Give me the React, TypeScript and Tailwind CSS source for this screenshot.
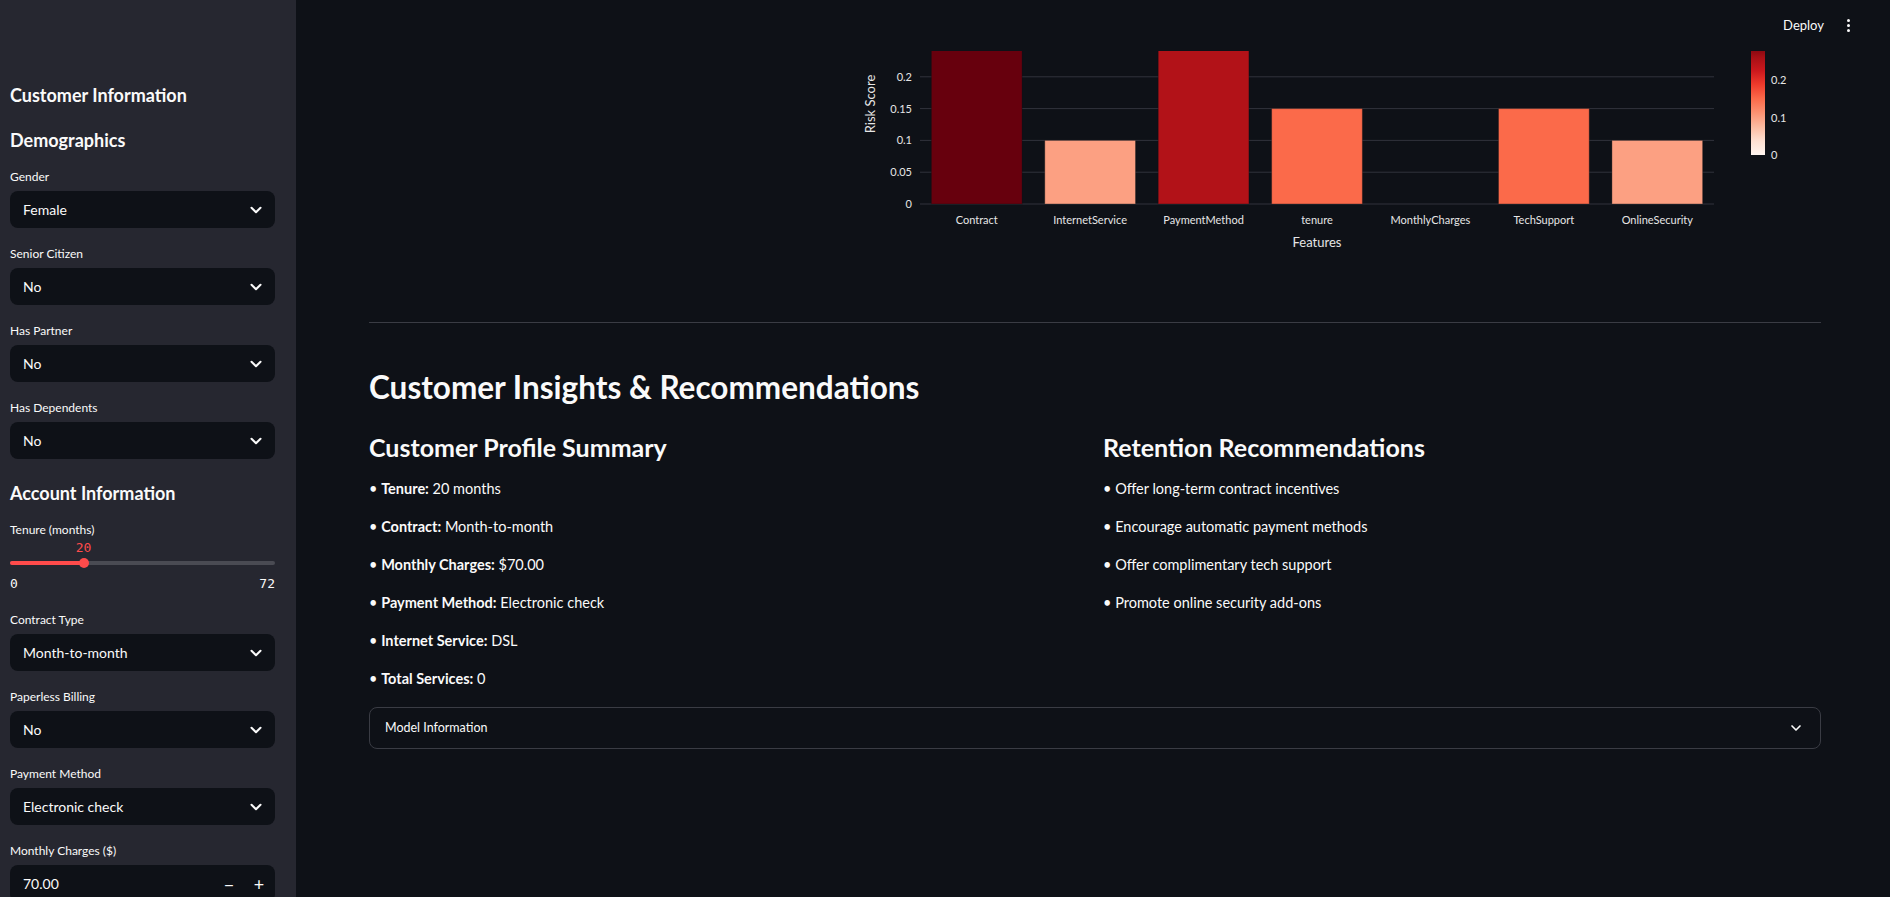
import React from 'react';
import { ChevronDown } from 'lucide-react';

const REDS: [number, number[]][] = [
  [0, [255, 245, 240]],
  [0.125, [254, 224, 210]],
  [0.25, [252, 187, 161]],
  [0.375, [252, 146, 114]],
  [0.5, [251, 106, 74]],
  [0.625, [239, 59, 44]],
  [0.75, [203, 24, 29]],
  [0.875, [165, 15, 21]],
  [1, [103, 0, 13]],
];

function redsColor(t: number) {
  for (let i = 1; i < REDS.length; i++) {
    const [p1, c1] = REDS[i];
    const [p0, c0] = REDS[i - 1];
    if (t <= p1) {
      const f = (t - p0) / (p1 - p0);
      const c = c0.map((a, k) => Math.round(a + (c1[k] - a) * f));
      return `rgb(${c[0]},${c[1]},${c[2]})`;
    }
  }
  return 'rgb(103,0,13)';
}

const features = [
  { name: 'Contract', v: 0.3 },
  { name: 'InternetService', v: 0.1 },
  { name: 'PaymentMethod', v: 0.25 },
  { name: 'tenure', v: 0.15 },
  { name: 'MonthlyCharges', v: 0 },
  { name: 'TechSupport', v: 0.15 },
  { name: 'OnlineSecurity', v: 0.1 },
];

const profile = [
  ['Tenure:', '20 months'],
  ['Contract:', 'Month-to-month'],
  ['Monthly Charges:', '$70.00'],
  ['Payment Method:', 'Electronic check'],
  ['Internet Service:', 'DSL'],
  ['Total Services:', '0'],
];

const recommendations = [
  'Offer long-term contract incentives',
  'Encourage automatic payment methods',
  'Offer complimentary tech support',
  'Promote online security add-ons',
];

const SelectBox = ({ label, value }: { label: string; value: string }) => (
  <div className="mb-4">
    <div className="h-5 text-[12px] leading-5">{label}</div>
    <div className="mt-1 flex h-[37px] items-center justify-between rounded-lg bg-[#0e1117] pl-[13px] pr-[10px] text-[14px]">
      <span>{value}</span>
      <ChevronDown size={18} strokeWidth={2.75} />
    </div>
  </div>
);

const RiskChart = () => {
  const x0 = 920;
  const x1 = 1714;
  const step = (x1 - x0) / features.length;
  const y = (v: number) => 204 - 636 * v;
  const cy = (v: number) => 155 - 375 * v;
  return (
    <svg viewBox="369 51 1452 210" width={1452} height={210} className="block" fontFamily="Lato, sans-serif">
      <defs>
        <linearGradient id="reds" x1="0" y1="1" x2="0" y2="0">
          {REDS.map(([p, c]) => (
            <stop key={p} offset={p} stopColor={`rgb(${c[0]},${c[1]},${c[2]})`} />
          ))}
        </linearGradient>
      </defs>
      {[0, 0.05, 0.1, 0.15, 0.2].map((t) => (
        <g key={t}>
          <line x1={x0} x2={x1} y1={y(t)} y2={y(t)} stroke="#31333c" strokeWidth={1} />
          <text x={912} y={y(t) + 4} fontSize={11} fill="#e6e6e6" textAnchor="end">
            {t}
          </text>
        </g>
      ))}
      {features.map((f, i) => {
        const cx = x0 + step * (i + 0.5);
        const w = step * 0.8;
        return (
          <g key={f.name}>
            {f.v > 0 && (
              <rect
                x={cx - w / 2}
                y={y(f.v)}
                width={w}
                height={204 - y(f.v)}
                fill={redsColor(f.v / 0.3)}
                stroke="rgba(14,17,23,0.35)"
                strokeWidth={1}
              />
            )}
            <text x={cx} y={224} fontSize={11} fill="#e6e6e6" textAnchor="middle">
              {f.name}
            </text>
          </g>
        );
      })}
      <text x={1317} y={247} fontSize={13} fill="#e6e6e6" textAnchor="middle">
        Features
      </text>
      <text x={875} y={104} fontSize={13} fill="#e6e6e6" textAnchor="middle" transform="rotate(-90 875 104)">
        Risk Score
      </text>
      <rect x={1751} y={cy(0.3)} width={14} height={cy(0) - cy(0.3)} fill="url(#reds)" />
      {[0, 0.1, 0.2].map((t) => (
        <text key={t} x={1771} y={cy(t) + 4} fontSize={11} fill="#e6e6e6">
          {t}
        </text>
      ))}
    </svg>
  );
};

export default function App() {
  const tenure = 20;
  const trackW = 265;
  const fill = (tenure / 72) * trackW;

  return (
    <div className="flex h-screen w-full overflow-hidden bg-[#0e1117] font-['Lato',sans-serif] text-[#fafafa]">
      <aside className="w-[296px] shrink-0 bg-[#262730] pl-[10px] pr-[21px] pt-[81px]">
        <h2 className="text-[18px] font-bold leading-7">Customer Information</h2>
        <h3 className="mt-[17px] text-[18px] font-bold leading-7">Demographics</h3>
        <div className="mt-[13px]">
          <SelectBox label="Gender" value="Female" />
          <SelectBox label="Senior Citizen" value="No" />
          <SelectBox label="Has Partner" value="No" />
          <SelectBox label="Has Dependents" value="No" />
        </div>
        <h3 className="mt-[20px] text-[18px] font-bold leading-7">Account Information</h3>
        <div className="mb-[18px] mt-[13px]">
          <div className="h-5 text-[12px] leading-5">Tenure (months)</div>
          <div className="relative h-4">
            <span
              className="absolute top-0 -translate-x-1/2 font-['DejaVu_Sans_Mono',monospace] text-[13px] leading-4 text-[#ff4b4b]"
              style={{ left: fill }}
            >
              {tenure}
            </span>
          </div>
          <div className="relative h-[14px]">
            <div className="absolute left-0 right-0 top-[5px] h-1 rounded-full bg-[#4a4b53]" />
            <div className="absolute left-0 top-[5px] h-1 rounded-full bg-[#ff4b4b]" style={{ width: fill }} />
            <div
              className="absolute top-[2px] h-[10px] w-[10px] -translate-x-1/2 rounded-full bg-[#ff4b4b]"
              style={{ left: fill }}
            />
          </div>
          <div className="mt-[6px] flex justify-between font-['DejaVu_Sans_Mono',monospace] text-[13px] leading-4">
            <span>0</span>
            <span>72</span>
          </div>
        </div>
        <SelectBox label="Contract Type" value="Month-to-month" />
        <SelectBox label="Paperless Billing" value="No" />
        <SelectBox label="Payment Method" value="Electronic check" />
        <div>
          <div className="h-5 text-[12px] leading-5">Monthly Charges ($)</div>
          <div className="mt-1 flex h-[37px] items-center rounded-lg bg-[#0e1117] pl-[13px] pr-[1px] text-[14px]">
            <span className="flex-1">70.00</span>
            <span className="flex w-[30px] justify-center text-lg">−</span>
            <span className="flex w-[30px] justify-center text-lg">+</span>
          </div>
        </div>
      </aside>

      <main className="flex-1">
        <header className="flex h-[51px] items-center justify-end pr-[38px]">
          <span className="text-[13px]">Deploy</span>
          <span className="ml-5 flex w-2 flex-col items-center gap-[2px]">
            <span className="h-[3px] w-[3px] rounded-full bg-[#fafafa]" />
            <span className="h-[3px] w-[3px] rounded-full bg-[#fafafa]" />
            <span className="h-[3px] w-[3px] rounded-full bg-[#fafafa]" />
          </span>
        </header>

        <div className="ml-[73px] w-[1452px]">
          <RiskChart />
          <hr className="mt-[61px] border-t border-[#3a3c44]" />
          <h1 className="mt-[42px] text-[31.5px] font-bold leading-[44px]">Customer Insights &amp; Recommendations</h1>
          <div className="mt-5 grid grid-cols-2 gap-4">
            <div>
              <h3 className="text-[25px] font-bold leading-9">Customer Profile Summary</h3>
              <div className="mt-3 flex flex-col gap-[14px]">
                {profile.map(([k, v]) => (
                  <p key={k} className="text-[14.5px] leading-6">
                    • <span className="font-bold">{k}</span> {v}
                  </p>
                ))}
              </div>
            </div>
            <div>
              <h3 className="text-[25px] font-bold leading-9">Retention Recommendations</h3>
              <div className="mt-3 flex flex-col gap-[14px]">
                {recommendations.map((r) => (
                  <p key={r} className="text-[14.5px] leading-6">
                    • {r}
                  </p>
                ))}
              </div>
            </div>
          </div>
          <div className="mt-4 flex h-[42px] items-center justify-between rounded-lg border border-[#3a3c44] pl-[15px] pr-[16px]">
            <span className="text-[12.5px]">Model Information</span>
            <ChevronDown size={16} strokeWidth={2.5} />
          </div>
        </div>
      </main>
    </div>
  );
}
